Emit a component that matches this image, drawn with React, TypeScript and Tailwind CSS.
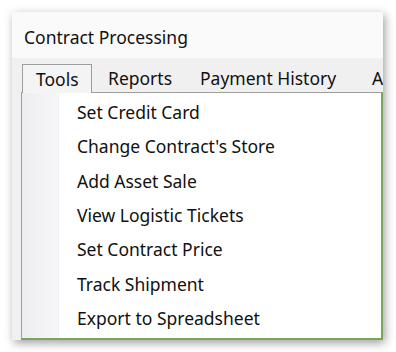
import React from "react";

const items = [
  "Set Credit Card",
  "Change Contract's Store",
  "Add Asset Sale",
  "View Logistic Tickets",
  "Set Contract Price",
  "Track Shipment",
  "Export to Spreadsheet",
];

export default function App() {
  return (
    <div
      className="relative w-[396px] h-[352px] bg-white overflow-hidden text-[#111111]"
      style={{ fontFamily: '"Noto Sans", "Open Sans", sans-serif' }}
    >
      <div className="absolute left-[12px] top-[12px] w-[371px] h-[328px] bg-[#fafafb] overflow-hidden shadow-[2px_3px_9px_rgba(0,0,0,0.38)] flex flex-col">
        <div className="h-[46px] shrink-0 pl-[12px] pt-[4px] flex items-center text-[17.5px]">
          Contract Processing
        </div>
        <div className="flex-1 bg-[#f0f0f0] flex flex-col">
          <div className="flex items-end h-[35px] pl-[10px] pt-[6px] text-[17.5px] relative z-10">
            <div className="h-[29px] w-[70px] pl-[13px] border border-b-0 border-[#9d9d9d] bg-[#f4f4f4] flex items-center shrink-0">
              Tools
            </div>
            <div className="h-[29px] w-[108px] flex items-center pl-[16px] shrink-0">Reports</div>
            <div className="h-[29px] w-[172px] flex items-center shrink-0 whitespace-nowrap">Payment History</div>
            <div className="h-[29px] flex items-center whitespace-nowrap">Add</div>
          </div>
          <div className="ml-[9px] -mt-px flex-1 bg-white border-l border-t border-[#9d9d9d] border-b-2 border-b-[#76a85a] border-r-2 border-r-[#76a85a] flex relative">
            <div className="w-[37px] shrink-0 bg-gradient-to-r from-[#eeeef0] to-[#f6f6f8] border-r border-[#f0f0f0]" />
            <div className="flex flex-col pt-[2px] pl-[18px] text-[17.5px]">
              {items.map((t) => (
                <div key={t} className="h-[34.3px] flex items-center whitespace-nowrap">
                  {t}
                </div>
              ))}
            </div>
          </div>
        </div>
      </div>
    </div>
  );
}
